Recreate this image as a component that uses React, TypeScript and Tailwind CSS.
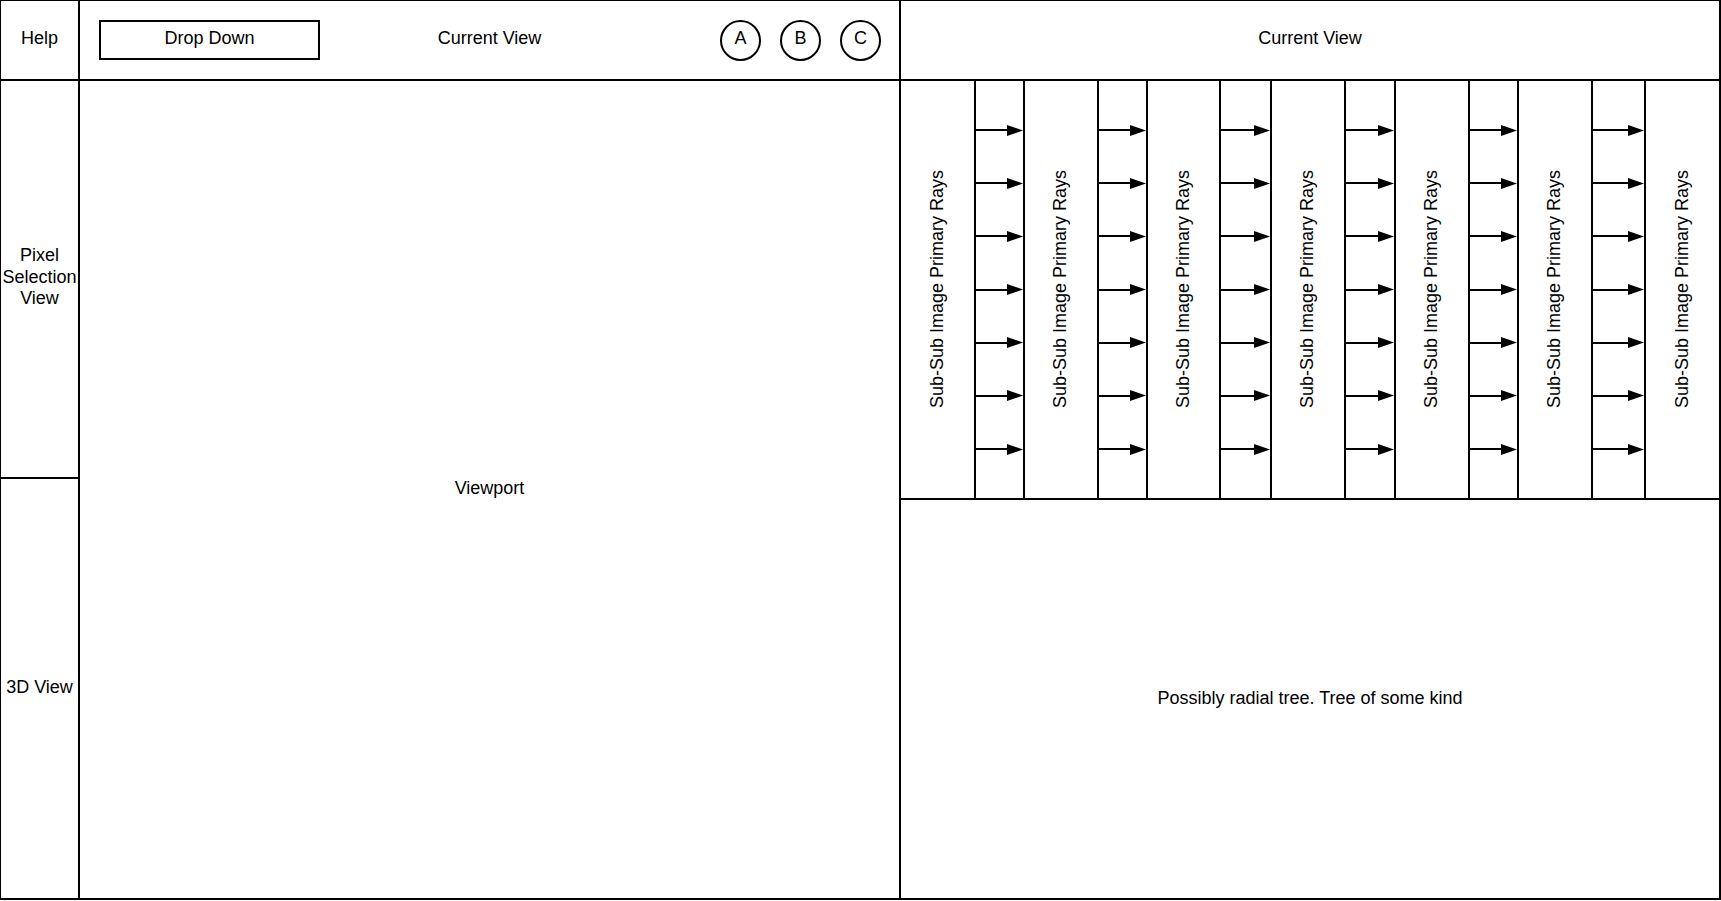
const font = { fontFamily: '"Liberation Sans", Arial, sans-serif' }

function Arrow() {
  return (
    <div className="flex items-center h-[11px]">
      <div className="flex-1 h-[2px] bg-black" />
      <svg width="16" height="11" viewBox="0 0 16 11" className="shrink-0">
        <polygon points="0,0 16,5.5 0,11" fill="black" />
      </svg>
    </div>
  )
}

function ArrowColumn({ w }: { w: string }) {
  return (
    <div className={`${w} shrink-0 border-r-2 border-black flex flex-col pt-[43.5px] gap-[42.2px]`}>
      {Array.from({ length: 7 }).map((_, i) => (
        <Arrow key={i} />
      ))}
    </div>
  )
}

function RaysColumn({ w, last }: { w: string; last?: boolean }) {
  return (
    <div className={`${w} flex items-center justify-center ${last ? '' : 'shrink-0 border-r-2 border-black'}`}>
      <span className="[writing-mode:vertical-rl] rotate-180 whitespace-nowrap">Sub-Sub Image Primary Rays</span>
    </div>
  )
}

export default function App() {
  return (
    <div
      className="w-[1721px] h-[901px] bg-white text-black text-[18px] leading-[1.2]"
      style={font}
    >
      <div className="w-[1721px] h-[900px] flex border-t border-l border-b-2 border-r-2 border-black">
        {/* Sidebar */}
        <div className="w-[79px] shrink-0 border-r-2 border-black flex flex-col">
          <div className="h-[80px] shrink-0 border-b-2 border-black flex items-center justify-center pb-[2px]">
            Help
          </div>
          <div className="h-[398px] shrink-0 border-b-2 border-black flex items-center justify-center text-center pb-[3px]">
            Pixel
            <br />
            Selection
            <br />
            View
          </div>
          <div className="flex-1 flex items-center justify-center pb-[2px]">3D View</div>
        </div>

        {/* Viewport column */}
        <div className="w-[821px] shrink-0 border-r-2 border-black flex flex-col">
          <div className="h-[80px] shrink-0 border-b-2 border-black grid grid-cols-[1fr_auto_1fr] items-center">
            <div className="pl-[19px]">
              <div className="w-[221px] h-[40px] border-2 border-black flex items-center justify-center pb-[3px]">
                Drop Down
              </div>
            </div>
            <div className="pb-[2px]">Current View</div>
            <div className="flex justify-end gap-[19px] pr-[18px]">
              {['A', 'B', 'C'].map((l) => (
                <div
                  key={l}
                  className="w-[41px] h-[41px] rounded-full border-2 border-black flex items-center justify-center pb-[3px]"
                >
                  {l}
                </div>
              ))}
            </div>
          </div>
          <div className="flex-1 flex items-center justify-center pb-[2px]">Viewport</div>
        </div>

        {/* Right panel */}
        <div className="flex-1 flex flex-col">
          <div className="h-[80px] shrink-0 border-b-2 border-black flex items-center justify-center pb-[2px]">
            Current View
          </div>
          <div className="h-[419px] shrink-0 border-b-2 border-black flex">
            <RaysColumn w="w-[75px]" />
            <ArrowColumn w="w-[49px]" />
            <RaysColumn w="w-[74px]" />
            <ArrowColumn w="w-[49px]" />
            <RaysColumn w="w-[73px]" />
            <ArrowColumn w="w-[51px]" />
            <RaysColumn w="w-[74px]" />
            <ArrowColumn w="w-[50px]" />
            <RaysColumn w="w-[74px]" />
            <ArrowColumn w="w-[49px]" />
            <RaysColumn w="w-[74px]" />
            <ArrowColumn w="w-[53px]" />
            <RaysColumn w="flex-1" last />
          </div>
          <div className="flex-1 flex items-center justify-center">
            Possibly radial tree. Tree of some kind
          </div>
        </div>
      </div>
    </div>
  )
}
